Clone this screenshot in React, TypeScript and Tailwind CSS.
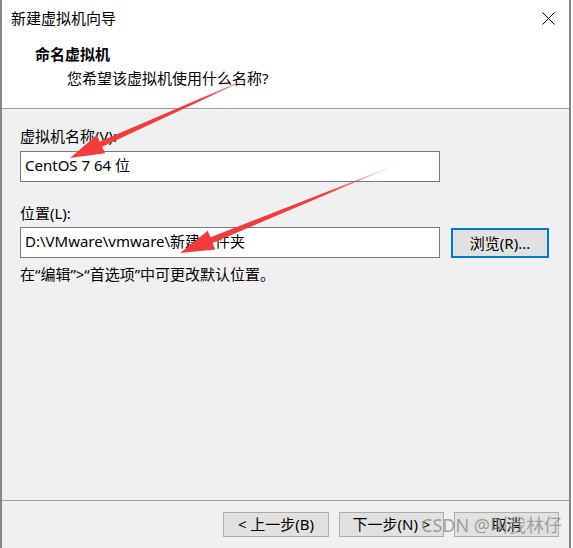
import React from "react";

const font = "font-['Noto_Sans','Noto_Sans_CJK_SC',sans-serif]";

function WizardButton({ label, className = "" }: { label: string; className?: string }) {
  return (
    <button
      className={`h-[25px] w-[105px] border border-[#adadad] bg-[#e1e1e1] text-[15px] leading-none text-black ${className}`}
    >
      {label}
    </button>
  );
}

function Arrows() {
  return (
    <svg className="pointer-events-none absolute inset-0" width="573" height="548" viewBox="0 0 573 548">
      <defs>
        <linearGradient id="fade1" gradientUnits="userSpaceOnUse" x1="258" y1="74" x2="70" y2="158">
          <stop offset="0" stopColor="#f03c3c" stopOpacity="0.3" />
          <stop offset="0.3" stopColor="#f03c3c" stopOpacity="1" />
          <stop offset="1" stopColor="#f03c3c" stopOpacity="1" />
        </linearGradient>
        <linearGradient id="fade2" gradientUnits="userSpaceOnUse" x1="403" y1="162" x2="180" y2="253">
          <stop offset="0" stopColor="#f03c3c" stopOpacity="0" />
          <stop offset="0.35" stopColor="#f03c3c" stopOpacity="1" />
          <stop offset="1" stopColor="#f03c3c" stopOpacity="1" />
        </linearGradient>
      </defs>
      <polygon
        fill="url(#fade1)"
        points="258,74 102.2,146.8 105.1,153.2 70,158 96.9,135 99.8,141.4"
      />
      <polygon
        fill="url(#fade2)"
        points="403,162 212.6,242.9 215.3,249.4 180,253 207.7,230.8 210.4,237.3"
      />
    </svg>
  );
}

export default function App() {
  return (
    <div className={`relative h-[548px] w-[573px] overflow-hidden bg-white ${font} text-black`}>
      <div className="flex h-full w-[571px] flex-col border-x-2 border-[#868686]">
        {/* header */}
        <div className="h-[109px] border-b border-[#a0a0a0] bg-white">
          <div className="flex h-[36px] items-start justify-between pt-[8px] pl-[9px] pr-[14px]">
            <span className="text-[15px] leading-[20px]">新建虚拟机向导</span>
            <svg width="13" height="13" viewBox="0 0 13 13" className="mt-[4px]">
              <path d="M0.5 0.5 L12.5 12.5 M12.5 0.5 L0.5 12.5" stroke="#000" strokeWidth="1" />
            </svg>
          </div>
          <p className="mt-[8px] pl-[33px] text-[15px] font-bold leading-[20px]">命名虚拟机</p>
          <p className="mt-[4px] pl-[65px] text-[15px] leading-[20px]">您希望该虚拟机使用什么名称?</p>
        </div>

        {/* body */}
        <div className="flex-1 bg-[#f0f0f0] pl-[18px] pt-[17px]">
          <p className="text-[15px] leading-[20px]">虚拟机名称(V):</p>
          <div className="mt-[5px] flex h-[31px] w-[420px] items-center border border-[#7a7a7a] bg-white pb-[3px] pl-[4px] text-[15px]">
            CentOS 7 64 位
          </div>
          <p className="mt-[21px] text-[15px] leading-[20px]">位置(L):</p>
          <div className="mt-[4px] flex items-start gap-[11px]">
            <div className="flex h-[31px] w-[420px] items-center border border-[#7a7a7a] bg-white pb-[3px] pl-[4px] text-[15px]">
              D:\VMware\vmware\新建文件夹
            </div>
            <button className="mt-px h-[30px] w-[98px] border-2 border-[#0078d7] bg-[#e1e1e1] text-[15px] leading-none">
              浏览(R)...
            </button>
          </div>
          <p className="mt-[6px] text-[15px] leading-[20px]">在“编辑”&gt;“首选项”中可更改默认位置。</p>
        </div>

        {/* footer */}
        <div className="flex h-[48px] items-start justify-end gap-[10px] border-t border-[#a0a0a0] bg-[#f0f0f0] pr-[10px] pt-[11px]">
          <WizardButton label="< 上一步(B)" className="w-[106px]" />
          <WizardButton label="下一步(N) >" />
          <WizardButton label="取消" />
        </div>
      </div>

      <Arrows />

      <span className="pointer-events-none absolute left-[421px] top-[513px] text-[18px] leading-[24px] text-[#8c8c8c]/80">
        CSDN @叫我林仔
      </span>
    </div>
  );
}
